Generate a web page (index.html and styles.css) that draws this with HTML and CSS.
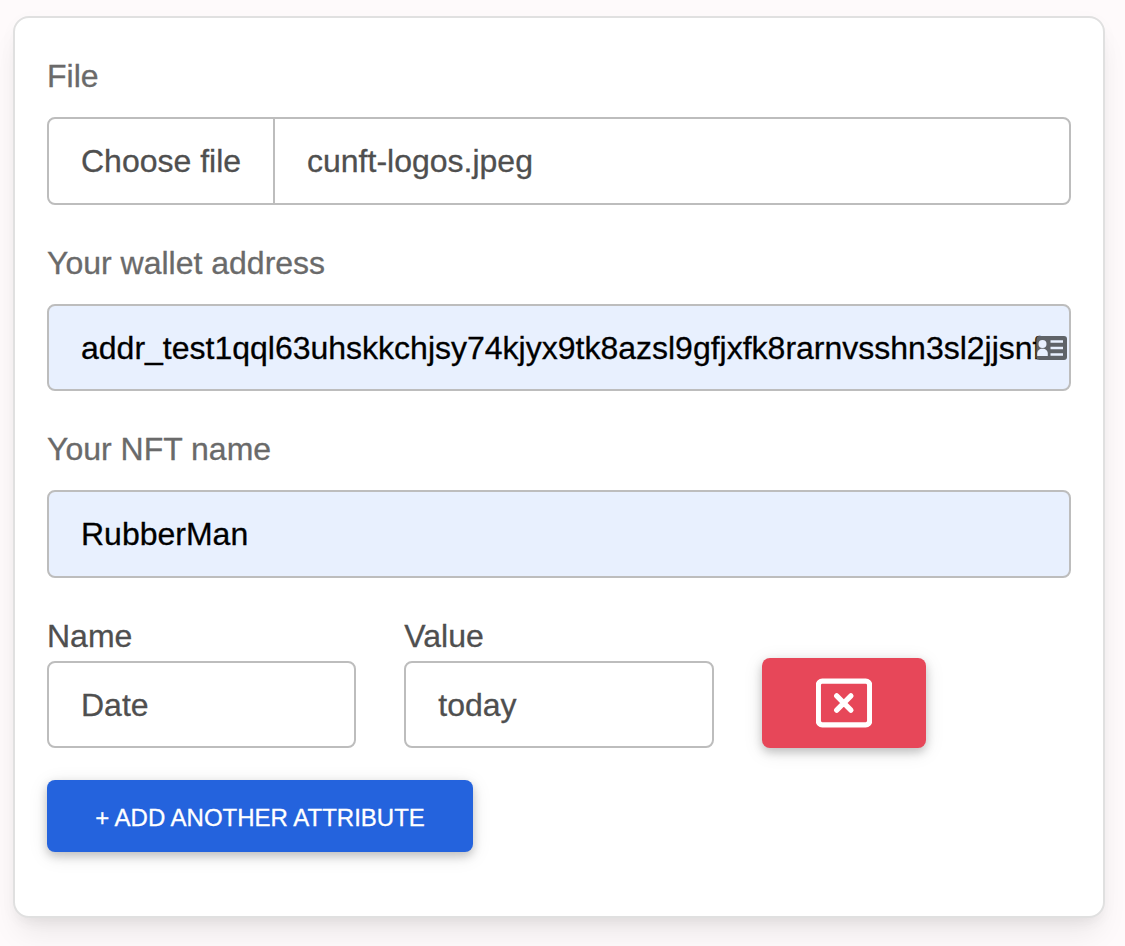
FILE: index.html
```html
<!DOCTYPE html>
<html lang="en">
<head>
<meta charset="utf-8">
<title>Mint NFT</title>
<link rel="stylesheet" href="styles.css">
</head>
<body>
<main class="card">
  <label class="label">File</label>
  <div class="field tall file"><span class="choose">Choose file</span><span class="filename">cunft-logos.jpeg</span></div>
  <label class="label">Your wallet address</label>
  <div class="field filled wallet"><span>addr_test1qql63uhskkchjsy74kjyx9tk8azsl9gfjxfk8rarnvsshn3sl2jjsnf</span>
    <svg class="contact" viewBox="0 0 31 24"><rect x="0.3" width="30.700" height="24" rx="3" fill="#5f6368"/><circle cx="6.500" cy="8" r="4" fill="#e8f0fe"/><path d="M1.200 20v-2.500c0-2.700 2-4.800 5.300-4.800s5.300 2.100 5.300 4.800V20z" fill="#e8f0fe"/><path d="M14.500 5.500h12.500M14.500 12h12.500M14.500 18.500h12.500" stroke="#e8f0fe" stroke-width="2.600"/></svg>
  </div>
  <label class="label">Your NFT name</label>
  <div class="field tall filled">RubberMan</div>
  <div class="attributes">
    <div class="attribute"><label>Name</label><div class="field">Date</div></div>
    <div class="attribute"><label>Value</label><div class="field">today</div></div>
    <button class="remove" aria-label="Remove attribute"><svg viewBox="0 0 56 50" fill="none" stroke="#fff" stroke-width="5.300"><rect x="2.300" y="3.150" width="51.400" height="43.700" rx="4"/><path d="M20.700 17.900l14.200 14.200M34.900 17.900L20.700 32.100" stroke-linecap="round"/></svg></button>
  </div>
  <button class="add">+ ADD ANOTHER ATTRIBUTE</button>
</main>
</body>
</html>
```
FILE: styles.css
```css
* { box-sizing: border-box; }
body { margin: 0; height: 946px; overflow: hidden; padding: 16px 20px 0 13px; background: #fefafb; font: 32px/48px "Liberation Sans", Arial, sans-serif; color: #4f4f4f; -webkit-text-stroke: .3px currentColor; }
.card { height: 902px; padding: 32px 32px 0; background: #fff; border: 2px solid #e0e0e0; border-radius: 16px; box-shadow: 0 20px 30px -6px rgba(0,0,0,.08), 0 8px 12px -4px rgba(0,0,0,.04), 0 4px 20px rgba(0,0,0,.025); }
.label { display: block; height: 51px; padding-top: 2px; margin-bottom: 16px; color: #6a6a6a; }
.field { display: flex; align-items: center; height: 87px; padding: 0 32px; border: 2px solid #bdbdbd; border-radius: 8px; background: #fff; white-space: nowrap; margin-bottom: 32px; }
.tall { height: 88px; }
.file { padding: 0; }
.choose { height: 100%; width: 226px; padding: 18px 0 0 32px; border-right: 2px solid #bdbdbd; }
.filename { padding-left: 32px; }
.filled { background: #e8f0fe; color: #000; }
.wallet { position: relative; }
.contact { position: absolute; right: 2px; top: 30px; width: 31px; height: 24px; }
.attributes { display: flex; gap: 48px; height: 138px; }
.attribute { width: 309.33px; }
.attribute label { display: block; height: 51px; padding-top: 2px; }
.remove { display: grid; place-items: center; align-self: flex-end; width: 164px; height: 90px; padding: 0; border: 0; border-radius: 8px; background: #e74759; }
.remove svg { width: 56px; height: 50px; }
.add { display: block; width: 426px; height: 72px; margin-top: 32px; padding: 3px 0 0; border: 0; border-radius: 8px; background: #2463dd; color: #fff; font: 24px/36px "Liberation Sans", Arial, sans-serif; -webkit-text-stroke: .3px #fff; }
.remove, .add { box-shadow: 0 4px 10px rgba(0,0,0,.2), 0 4px 20px rgba(0,0,0,.1); }
```
